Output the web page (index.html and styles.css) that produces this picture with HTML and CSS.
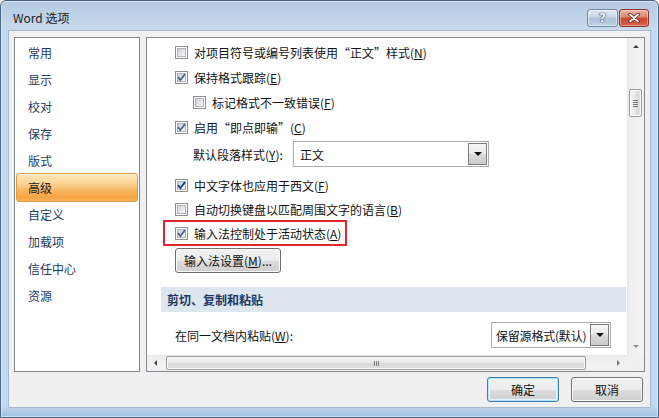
FILE: index.html
```html
<!DOCTYPE html>
<html lang="zh-CN">
<head>
<meta charset="utf-8">
<title>Word 选项</title>
<link rel="stylesheet" href="styles.css">
</head>
<body>
<div class="window">
  <div class="titlebar">
    <span class="title">Word 选项</span>
    <div class="caption-btns">
      <span class="cbtn help">?</span>
      <span class="cbtn close">
        <svg width="12" height="10" viewBox="0 0 12 10"><path d="M2 1.5 L10 8.5 M10 1.5 L2 8.5" stroke="#6a2418" stroke-width="3.6" stroke-linecap="round"/><path d="M2 1.5 L10 8.5 M10 1.5 L2 8.5" stroke="#ffffff" stroke-width="1.8" stroke-linecap="round"/></svg>
      </span>
    </div>
  </div>
  <div class="client">
    <div class="main">
      <ul class="nav">
        <li>常用</li>
        <li>显示</li>
        <li>校对</li>
        <li>保存</li>
        <li>版式</li>
        <li class="sel">高级</li>
        <li>自定义</li>
        <li>加载项</li>
        <li>信任中心</li>
        <li>资源</li>
      </ul>
      <div class="panel">
        <div class="content">
          <div class="row"><span class="cb"></span><span>对项目符号或编号列表使用“正文”样式(<u>N</u>)</span></div>
          <div class="row"><span class="cb on soft"><svg viewBox="0 0 13 13"><path d="M3 6.2 L5.3 9 L10 3.2"/></svg></span><span>保持格式跟踪(<u>E</u>)</span></div>
          <div class="row indent"><span class="cb"></span><span>标记格式不一致错误(<u>F</u>)</span></div>
          <div class="row"><span class="cb on soft"><svg viewBox="0 0 13 13"><path d="M3 6.2 L5.3 9 L10 3.2"/></svg></span><span>启用“即点即输”(<u>C</u>)</span></div>
          <div class="row select-row">
            <span class="label">默认段落样式(<u>Y</u>):</span>
            <div class="combo wide"><span class="combo-text">正文</span><span class="combo-btn"><i class="tri-down"></i></span></div>
          </div>
          <div class="row gap-top"><span class="cb on"><svg viewBox="0 0 13 13"><path d="M3 6.2 L5.3 9 L10 3.2"/></svg></span><span>中文字体也应用于西文(<u>F</u>)</span></div>
          <div class="row short"><span class="cb"></span><span>自动切换键盘以匹配周围文字的语言(<u>B</u>)</span></div>
          <div class="row ime"><span class="cb on soft"><svg viewBox="0 0 13 13"><path d="M3 6.2 L5.3 9 L10 3.2"/></svg></span><span>输入法控制处于活动状态(<u>A</u>)</span></div>
          <div class="row btn-row"><button class="btn ime-btn">输入法设置(<u>M</u>)...</button></div>
          <div class="section">剪切、复制和粘贴</div>
          <div class="row paste-row">
            <span>在同一文档内粘贴(<u>W</u>):</span>
            <div class="combo narrow"><span class="combo-text">保留源格式(默认)</span><span class="combo-btn"><i class="tri-down"></i></span></div>
          </div>
        </div>
        <div class="vscroll">
          <div class="arrow-box"><i class="tri-up"></i></div>
          <div class="vthumb"><span></span><span></span><span></span><span></span></div>
          <div class="spacer"></div>
          <div class="arrow-box"><i class="tri-down light"></i></div>
        </div>
        <div class="hscroll">
          <div class="arrow-box h"><i class="tri-left"></i></div>
          <div class="hthumb"><span></span><span></span><span></span></div>
          <div class="spacer"></div>
          <div class="arrow-box h"><i class="tri-right"></i></div>
        </div>
        <div class="corner"></div>
      </div>
    </div>
    <div class="footer">
      <button class="btn dlg default">确定</button>
      <button class="btn dlg">取消</button>
    </div>
  </div>
</div>
</body>
</html>
```
FILE: styles.css
```css
* { box-sizing: border-box; }
html, body { margin: 0; padding: 0; }
body {
  width: 659px;
  height: 418px;
  overflow: hidden;
  background: #ffffff;
  font-family: "Noto Sans CJK SC", "Noto Sans", sans-serif;
  font-size: 12px;
  color: #111;
}
u { text-decoration: underline; text-underline-offset: 1px; }

.window {
  width: 659px;
  height: 418px;
  border: 1px solid #4a6584;
  border-radius: 6px 6px 0 0;
  background: linear-gradient(to bottom, #b5cbe3 0px, #c8d9ec 29px, #c2d8ef 30px, #c3d9f0 405px, #9fc1e0 416px);
  box-shadow: inset 0 0 0 1px rgba(255,255,255,0.45);
  display: flex;
  flex-direction: column;
}

.titlebar {
  height: 29px;
  flex: none;
  display: flex;
  align-items: center;
  padding: 5px 9px 0 12px;
}
.title { font-size: 12px; line-height: 14px; color: #1c1c1c; }
.caption-btns { margin-left: auto; display: flex; gap: 1px; }
.cbtn {
  height: 18px;
  display: flex;
  align-items: center;
  justify-content: center;
  border-radius: 3px;
}
.help {
  width: 31px;
  border: 1px solid #7189a6;
  background: linear-gradient(to bottom, #dde7f2 0%, #c8d7e8 45%, #abc1da 50%, #bed0e4 100%);
  box-shadow: inset 0 0 0 1px rgba(255,255,255,0.5);
  font-family: "DejaVu Sans", sans-serif;
  font-weight: bold;
  font-size: 12px;
  line-height: 12px;
  color: #f4f7fb;
  text-shadow: 0 0 1px #2e4664, 0 0 1px #2e4664, 0 0 1px #2e4664;
}
.close {
  width: 30px;
  border: 1px solid #8b3628;
  background: linear-gradient(to bottom, #ecb4a6 0%, #dd8672 45%, #c8462f 50%, #d6634b 100%);
  box-shadow: inset 0 0 0 1px rgba(255,255,255,0.35);
}

.client {
  flex: 1;
  margin: 0 7px 9px 7px;
  border: 1px solid #a6b9cf;
  background: #f0f0f0;
  padding: 6px 5px 0 5px;
  display: flex;
  flex-direction: column;
}
.main { display: flex; gap: 6px; height: 335px; flex: none; }

.nav {
  width: 126px;
  flex: none;
  margin: 0;
  padding: 1px 0 0 0;
  list-style: none;
  background: #fff;
  border: 1px solid #828790;
}
.nav li {
  height: 27px;
  display: flex;
  align-items: center;
  padding-left: 13px;
  color: #1e3a62;
}
.nav li.sel {
  height: 29px;
  margin: -1px 1px;
  padding-left: 11px;
  border: 1px solid #dd9a46;
  border-radius: 3px;
  background: linear-gradient(to bottom, #fde7b6 0%, #fcd596 35%, #f9b862 60%, #f6a343 85%, #f8b257 100%);
  box-shadow: inset 0 1px 0 rgba(255,255,255,0.6);
  color: #1a1a1a;
}

.panel {
  flex: 1;
  border: 1px solid #828790;
  background: #fff;
  display: grid;
  grid-template-columns: 1fr 17px;
  grid-template-rows: 1fr 16px;
}
.content { overflow: hidden; padding-top: 2px; }

.row {
  height: 25px;
  display: flex;
  align-items: center;
  padding-left: 28px;
  white-space: nowrap;
}
.row.indent { padding-left: 46px; }
.row.select-row { height: 26px; margin-top: 1px; padding-left: 46px; }
.row.gap-top { height: 24px; margin-top: 6px; }
.row.short { height: 24px; }
.row.ime {
  height: 26px;
  width: 184px;
  margin-top: -1px;
  margin-left: 16px;
  padding-left: 10px;
  border: 2px solid #e3272d;
}
.row.btn-row { margin-top: 2px; }
.row.paste-row {
  height: 26px;
  margin-top: 10px;
  padding-right: 16px;
  justify-content: space-between;
}
.label { width: 100px; flex: none; }

.cb {
  width: 13px;
  height: 13px;
  flex: none;
  margin-right: 6px;
  border: 1px solid #8e8f8f;
  background: #fff;
  position: relative;
}
.cb::before {
  content: "";
  position: absolute;
  left: 1px; top: 1px; right: 1px; bottom: 1px;
  border: 1px solid #b0b5bb;
  background: linear-gradient(135deg, #c9ced5 0%, #e6e8eb 55%, #f7f7f7 100%);
}
.cb svg {
  position: absolute;
  left: -1px; top: -1px;
  width: 13px; height: 13px;
  fill: none;
  stroke: #1f3f8f;
  stroke-width: 1.9;
}
.cb.soft svg { stroke: #55698f; }

.combo {
  height: 26px;
  border: 1px solid #a9abb0;
  background: #fff;
  display: flex;
  align-items: center;
  padding: 1px;
}
.combo.wide { width: 196px; }
.combo.narrow { width: 120px; }
.combo-text { flex: 1; padding-left: 5px; }
.combo.narrow .combo-text { padding-left: 3px; letter-spacing: -0.2px; }
.combo-btn {
  width: 19px;
  height: 100%;
  border: 1px solid #7b7b7b;
  background: linear-gradient(to bottom, #f6f6f6 0%, #e9e9e9 50%, #d9d9d9 51%, #cdcdcd 100%);
  display: flex;
  align-items: center;
  justify-content: center;
}

.tri-down, .tri-up, .tri-left, .tri-right { display: block; width: 0; height: 0; }
.tri-down { border-left: 4px solid transparent; border-right: 4px solid transparent; border-top: 4px solid #111; }
.tri-down.light { border-top-color: #8a8a8a; border-left-width: 3px; border-right-width: 3px; border-top-width: 3px; }
.tri-up { border-left: 3px solid transparent; border-right: 3px solid transparent; border-bottom: 3px solid #3a3a3a; }
.tri-left { border-top: 3px solid transparent; border-bottom: 3px solid transparent; border-right: 3px solid #4a4a4a; }
.tri-right { border-top: 3px solid transparent; border-bottom: 3px solid transparent; border-left: 3px solid #7a7a7a; }

.section {
  height: 25px;
  margin: 14px 1px 0 14px;
  padding-left: 6px;
  display: flex;
  align-items: center;
  background: #dde5ee;
  color: #1e3a62;
  font-weight: bold;
}

.btn {
  font-family: "Noto Sans CJK SC", "Noto Sans", sans-serif;
  font-size: 12px;
  color: #111;
  height: 25px;
  padding: 0;
  border: 1px solid #707070;
  border-radius: 3px;
  background: linear-gradient(to bottom, #f2f2f2 0%, #ebebeb 50%, #dddddd 51%, #cfcfcf 100%);
  box-shadow: inset 0 0 0 1px #fbfbfb;
  display: flex;
  align-items: center;
  justify-content: center;
}
.ime-btn { width: 106px; }

.vscroll {
  display: flex;
  flex-direction: column;
  background: linear-gradient(to right, #e3e3e3 0px, #efefef 2px, #f3f3f3 100%);
}
.arrow-box { height: 17px; flex: none; display: flex; align-items: center; justify-content: center; }
.arrow-box.h { height: 16px; width: 17px; }
.spacer { flex: 1; }
.vthumb {
  margin: 34px auto 0;
  width: 13px;
  height: 28px;
  border: 1px solid #9a9a9a;
  border-radius: 2px;
  background: linear-gradient(to right, #f4f4f4 0%, #e8e8e8 50%, #d8d8d8 51%, #e2e2e2 100%);
  box-shadow: inset 0 0 0 1px #fafafa;
  display: flex;
  flex-direction: column;
  align-items: center;
  justify-content: center;
  gap: 1px;
}
.vthumb span { display: block; width: 5px; height: 1px; background: #7a7a7a; }

.hscroll {
  display: flex;
  background: linear-gradient(to bottom, #e3e3e3 0px, #efefef 2px, #f3f3f3 100%);
}
.hthumb {
  margin: 1px 0 1px 2px;
  width: 420px;
  border: 1px solid #9a9a9a;
  border-radius: 2px;
  background: linear-gradient(to bottom, #f4f4f4 0%, #e8e8e8 50%, #d8d8d8 51%, #e2e2e2 100%);
  box-shadow: inset 0 0 0 1px #fafafa;
  display: flex;
  align-items: center;
  justify-content: center;
  gap: 1px;
}
.hthumb span { display: block; width: 1px; height: 5px; background: #7a7a7a; }
.corner { background: #f0f0f0; }

.footer {
  display: flex;
  justify-content: flex-end;
  gap: 12px;
  padding: 5px 2px 0 0;
}
.btn.dlg { width: 72px; }
.btn.default {
  border-color: #3c7fb1;
  box-shadow: inset 0 0 0 1px #b4e4fa, inset 0 0 0 2px #e4f4fc;
}
```
